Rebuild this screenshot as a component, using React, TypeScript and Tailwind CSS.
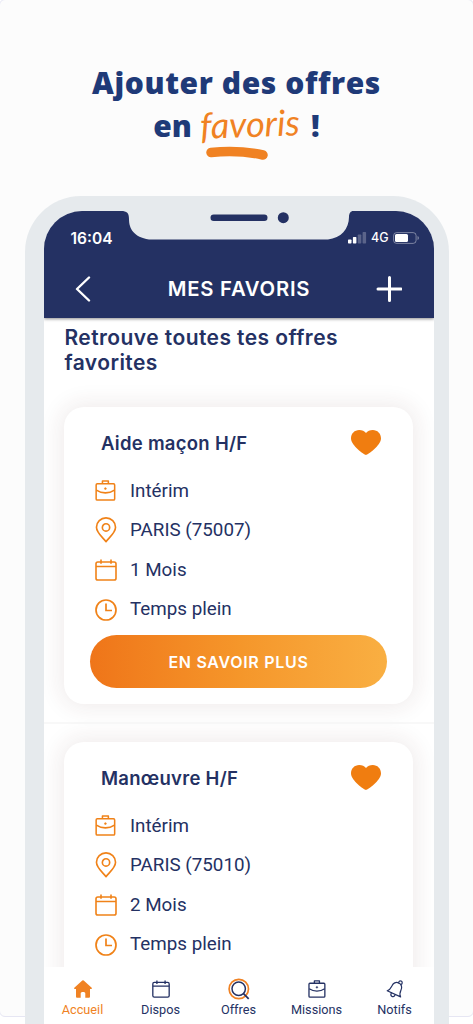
import type { ReactNode } from "react";

type IconProps = { className?: string };

function Briefcase({ className }: IconProps) {
  return (
    <svg viewBox="0 0 22 22" fill="none" stroke="currentColor" strokeWidth="1.6" strokeLinejoin="round" className={className}>
      <rect x="1.2" y="4" width="19.4" height="17" rx="1.2" />
      <path d="M7.8 3.8V1.1h6.2v2.700M1.400 10.600C5 13 8 13.500 10.900 13.500S17 13 20.400 10.600" />
      <circle cx="10.900" cy="9" r="1" fill="currentColor" strokeWidth=".6" />
    </svg>
  );
}

function Pin({ className }: IconProps) {
  return (
    <svg viewBox="0 0 22 27" fill="none" stroke="currentColor" strokeWidth="1.700" strokeLinejoin="round" className={className}>
      <path d="M11 25.600C8 21.500 1.100 16.500 1.100 10.600a9.900 9.700 0 0 1 19.800 0C20.900 16.500 14 21.500 11 25.600Z" />
      <circle cx="11" cy="10.800" r="3.800" />
    </svg>
  );
}

function Calendar({ className }: IconProps) {
  return (
    <svg viewBox="0 0 22 22" fill="none" stroke="currentColor" strokeWidth="1.600" className={className}>
      <rect x="1" y="3" width="20" height="18" rx="1.800" />
      <path d="M1 7.500h20M6 .6v4.200M16 .6v4.200" />
    </svg>
  );
}

function Clock({ className }: IconProps) {
  return (
    <svg viewBox="0 0 22 22" fill="none" stroke="currentColor" strokeWidth="1.700" className={className}>
      <circle cx="11" cy="11" r="10" />
      <path d="M11 4.500v7h6" />
    </svg>
  );
}

function Heart({ className }: IconProps) {
  return (
    <svg viewBox="0 0 30 25" fill="currentColor" className={className}>
      <path d="M15 25C13.200 24.600 0 15.500 0 8.500 0 3.500 3.600 0 8.200 0c2.900 0 5.300 1.100 6.800 3.100C16.500 1.100 18.900 0 21.800 0 26.400 0 30 3.500 30 8.500 30 15.500 16.800 24.600 15 25Z" />
    </svg>
  );
}

function Home({ className }: IconProps) {
  return (
    <svg viewBox="0 0 18 18" fill="currentColor" className={className}>
      <path d="M8.300.5a1 1 0 0 1 1.400 0l8 7.300c.5.500.2 1.200-.5 1.200H16v7.500c0 .8-.5 1.300-1.300 1.300H11.300v-4.300c0-1-.7-1.500-2.300-1.500s-2.300.5-2.300 1.500v4.300H3.300C2.500 17.800 2 17.300 2 16.500V9H.8C.1 9-.2 8.300.3 7.800Z" />
    </svg>
  );
}

function SearchRing({ className }: IconProps) {
  return (
    <svg viewBox="0 0 22 22" fill="none" className={className}>
      <circle cx="10.800" cy="11" r="9.700" stroke="#f08223" strokeWidth="1.700" />
      <circle cx="10.700" cy="10.700" r="6.700" stroke="#243163" strokeWidth="1.500" />
      <path d="m15.500 15.700 5.200 5.200" stroke="#243163" strokeWidth="1.700" />
    </svg>
  );
}

function Bell({ className }: IconProps) {
  return (
    <svg viewBox="0 0 18 18" fill="none" stroke="currentColor" strokeWidth="1.200" strokeLinejoin="round" strokeLinecap="round" className={className}>
      <path d="M1.200 10.800C4.500 9.800 5 7.800 6 5.800c1.100-2.600 3.800-4.200 6.700-2.800 3 1.300 3.600 4.400 2.300 7-1.100 2.200-1.700 4-.4 6.900Z" />
      <path d="M5.300 12.900c-.9 1.900-.3 3 .7 3.500 1.100.5 2.300.1 3-1.500M12.700 2.900c-.1-1.300.8-2.200 1.900-2.100 1.500.1 2.200 1.700 1 3.500" />
    </svg>
  );
}

const Detail = ({ icon, children }: { icon: ReactNode; children: ReactNode }) => (
  <li className="flex h-[39.600px] items-center">
    <span className="flex w-[24px] justify-center text-[#f08218]">{icon}</span>
    <span className="ml-[12.500px] whitespace-nowrap">{children}</span>
  </li>
);

type JobProps = { title: string; place: string; length: string; action?: string };

const JobCard = ({ title, place, length, action }: JobProps) => (
  <article className="h-[297px] w-[349px] shrink-0 rounded-[20px] bg-white shadow-[0_0_22px_4px_rgba(80,40,40,0.085)]">
    <header className="flex items-start justify-between pt-[23px] pr-[32.500px] pl-[37px]">
      <h2 className="font-['Inter'] text-[18.500px] leading-[26px] font-semibold tracking-[0.280px]">{title}</h2>
      <Heart className="h-[25px] w-[30px] text-[#f07d10]" />
    </header>
    <ul className="mt-[15px] pl-[29.500px] font-['Roboto'] text-[18.800px]">
      <Detail icon={<Briefcase className="size-[21px]" />}>Intérim</Detail>
      <Detail icon={<Pin className="h-[26px] w-[22px]" />}>{place}</Detail>
      <Detail icon={<Calendar className="size-[22px]" />}>{length}</Detail>
      <Detail icon={<Clock className="size-[22px]" />}>Temps plein</Detail>
    </ul>
    {action && (
      <button className="mt-[6px] ml-[26px] flex h-[53px] w-[297px] items-center justify-center rounded-full bg-linear-to-r from-[#ef7519] via-[#f5962a] to-[#f9af42] font-['Inter'] text-[16px] font-semibold tracking-[0.700px] text-white">
        {action}
      </button>
    )}
  </article>
);

const Tab = ({ label, icon, active = false }: { label: string; icon: ReactNode; active?: boolean }) => (
  <a className={active ? "flex w-[78px] flex-col items-center text-[#f08223]" : "flex w-[78px] flex-col items-center"}>
    <span className="flex h-[22px] items-center">{icon}</span>
    <span className="mt-[2px] text-[12.700px] leading-[16px]">{label}</span>
  </a>
);

export default function App() {
  return (
    <div className="relative h-[1024px] w-[473px] overflow-hidden bg-white font-['Inter',sans-serif] text-[#243163]">
      <div className="absolute -inset-x-px -top-px h-[1018px] rounded-[6px] border border-[#e6e6f3] bg-[#fcfcfc]" />

      <div className="relative flex flex-col items-center">
        <h1 className="flex h-[196px] w-full flex-col items-center pt-[62px] font-['Open_Sans'] text-[30px] leading-[42px] font-extrabold text-[#1f3a78]">
          <span className="whitespace-nowrap tracking-[0.600px]">Ajouter des offres</span>
          <span className="flex items-start whitespace-nowrap">
            <span className="pt-px">en</span>
            <span className="ml-[8px] w-[103px] -rotate-2 font-['Lato'] text-[36px] leading-[38px] font-normal italic text-[#f08223]">favoris</span>
            <span className="ml-[8px] pt-px">!</span>
          </span>
          <svg viewBox="0 0 62 14" className="-mt-px h-[14px] w-[62px] overflow-visible" fill="none">
            <path d="M5 6.500C23 4.500 41 5.500 57 9" stroke="#f08223" strokeWidth="9.500" strokeLinecap="round" />
          </svg>
        </h1>

        <div className="h-[900px] w-[424px] rounded-t-[56px] bg-[#e6eaed] pt-[15px] pl-[19px]">
          <div className="relative flex h-[813px] w-[390px] flex-col overflow-hidden rounded-t-[38px] bg-white">
            <header className="relative z-10 h-[107px] shrink-0 bg-[#243163] text-white shadow-[0_1px_3px_rgba(0,0,0,0.450)]">
              <svg viewBox="0 0 232 29" className="absolute top-0 left-[77px] h-[29px] w-[232px]">
                <path d="M0 0C6 0 8 2 8 8C8 18 13 26 28 28.500H207C220 27 228 18 228 6C228 2 230 0 232 0Z" fill="#e6eaed" />
                <rect x="89.500" y="3.500" width="57" height="6.500" rx="3.250" fill="#243163" />
                <circle cx="162.300" cy="6.700" r="5.500" fill="#243163" />
              </svg>
              <div className="flex h-[54px] items-center justify-between pr-[14px] pl-[27px]">
                <span className="pt-px text-[15.500px] font-semibold">16:04</span>
                <div className="flex items-center">
                  <svg viewBox="0 0 19 12" className="h-[12px] w-[19px]" fill="#fff">
                    <rect x="0" y="7.500" width="3.500" height="4" rx=".7" />
                    <rect x="4.900" y="5" width="3.500" height="6.500" rx=".7" />
                    <rect x="9.800" y="2.500" width="3.500" height="9" rx=".7" opacity=".25" />
                    <rect x="14.600" y="0" width="3.500" height="11.500" rx=".7" opacity=".25" />
                  </svg>
                  <span className="ml-[4px] text-[12.500px] font-medium">4G</span>
                  <svg viewBox="0 0 27 12" className="ml-[4px] h-[12px] w-[27px]" fill="#fff">
                    <rect x=".6" y=".6" width="22.500" height="10.800" rx="3" fill="none" stroke="#fff" strokeOpacity=".4" />
                    <rect x="2" y="2" width="13" height="8" rx="1.500" />
                    <path d="M24.500 4c2 .8 2 3.200 0 4Z" opacity=".4" />
                  </svg>
                </div>
              </div>
              <div className="flex h-[48px] items-center justify-between pr-[31px] pl-[31px]">
                <svg viewBox="0 0 16 26" className="h-[26px] w-[16px]" fill="none" stroke="#fff" strokeWidth="2.400" strokeLinecap="round" strokeLinejoin="round">
                  <path d="M14 1.500 2 13l12 11.500" />
                </svg>
                <span className="pl-[11px] text-[20.300px] font-semibold tracking-[0.750px]">MES FAVORIS</span>
                <svg viewBox="0 0 26 26" className="size-[26px]" fill="none" stroke="#fff" strokeWidth="3" strokeLinecap="round">
                  <path d="M13.500 1.500v23M2 13h23" />
                </svg>
              </div>
            </header>

            <main className="flex h-[649px] shrink-0 flex-col overflow-hidden">
              <p className="h-[89px] shrink-0 pt-[7px] pl-[21px] text-[21px] leading-[25px] font-semibold tracking-[0.430px]">
                Retrouve toutes tes offres
                <br />
                favorites
              </p>
              <div className="ml-[20.500px]">
                <JobCard title="Aide maçon H/F" place="PARIS (75007)" length="1 Mois" action="EN SAVOIR PLUS" />
              </div>
              <div className="mt-[18px] h-[2px] shrink-0 bg-[#f8f8f8]" />
              <div className="mt-[18px] ml-[20.500px]">
                <JobCard title="Manœuvre H/F" place="PARIS (75010)" length="2 Mois" />
              </div>
            </main>

            <nav className="relative flex h-[57px] shrink-0 bg-white pt-[11px] font-['Roboto']">
              <Tab active label="Accueil" icon={<Home className="size-[18px]" />} />
              <Tab label="Dispos" icon={<Calendar className="size-[18px]" />} />
              <Tab label="Offres" icon={<SearchRing className="size-[22px]" />} />
              <Tab label="Missions" icon={<Briefcase className="size-[18px]" />} />
              <Tab label="Notifs" icon={<Bell className="size-[18px]" />} />
            </nav>
          </div>
        </div>
      </div>
    </div>
  );
}
